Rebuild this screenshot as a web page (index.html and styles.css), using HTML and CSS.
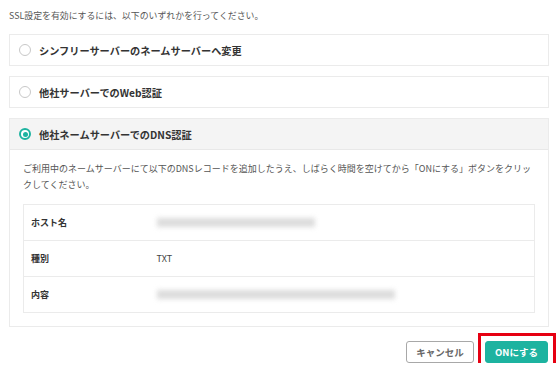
FILE: index.html
```html
<!DOCTYPE html>
<html lang="ja">

<head>
    <meta charset="UTF-8">
    <meta name="viewport" content="width=device-width, initial-scale=1.0">
    <title>SSL設定</title>
    <link rel="stylesheet" href="styles.css">
</head>

<body>
    <div class="container">
        <p class="lead">SSL設定を有効にするには、以下のいずれかを行ってください。</p>

        <div class="option">
            <div class="option-head">
                <span class="radio"></span>
                <span class="option-title">シンフリーサーバーのネームサーバーへ変更</span>
            </div>
        </div>

        <div class="option">
            <div class="option-head">
                <span class="radio"></span>
                <span class="option-title">他社サーバーでのWeb認証</span>
            </div>
        </div>

        <div class="option active">
            <div class="option-head">
                <span class="radio checked"></span>
                <span class="option-title">他社ネームサーバーでのDNS認証</span>
            </div>
            <div class="option-body">
                <p class="desc">ご利用中のネームサーバーにて以下のDNSレコードを追加したうえ、しばらく時間を空けてから「ONにする」ボタンをクリックしてください。</p>
                <table class="records">
                    <tr>
                        <th>ホスト名</th>
                        <td><span class="masked host"></span></td>
                    </tr>
                    <tr>
                        <th>種別</th>
                        <td>TXT</td>
                    </tr>
                    <tr>
                        <th>内容</th>
                        <td><span class="masked value"></span></td>
                    </tr>
                </table>
            </div>
        </div>

        <div class="actions">
            <button class="btn btn-cancel">キャンセル</button>
            <span class="highlight">
                <button class="btn btn-primary">ONにする</button>
            </span>
        </div>
    </div>
</body>

</html>
```

FILE: styles.css
```css
body {
    margin: 0;
    font-family: "Noto Sans CJK JP", "Noto Sans", sans-serif;
    color: #333;
    background: #fff;
}

.container {
    width: 540px;
    padding: 8px 0 0 9px;
}

.lead {
    margin: 0 0 10px;
    font-size: 8.9px;
    line-height: 16px;
    color: #555;
}

.option {
    border: 1px solid #ebebeb;
    margin-bottom: 10px;
}

.option-head {
    display: flex;
    align-items: center;
    height: 30px;
    padding-left: 9px;
}

.active .option-head {
    background-color: #f4f4f4;
    border-bottom: 1px solid #e8e8e8;
}

.radio {
    width: 10px;
    height: 10px;
    border: 1px solid #c8c8c8;
    border-radius: 50%;
    background: #fff;
    margin-right: 8px;
    position: relative;
}

.radio.checked {
    border: 2px solid #1db3a0;
    width: 8px;
    height: 8px;
}

.radio.checked::after {
    content: "";
    position: absolute;
    left: 1.5px;
    top: 1.5px;
    width: 5px;
    height: 5px;
    border-radius: 50%;
    background: #1db3a0;
}

.option-title {
    font-size: 10.2px;
    font-weight: bold;
    color: #333;
}

.option-body {
    padding: 11px 13px 13px 13px;
}

.desc {
    margin: 0 0 11px;
    font-size: 9px;
    line-height: 16px;
    color: #555;
}

.records {
    width: 100%;
    table-layout: fixed;
    border-collapse: collapse;
    border: 1px solid #ebebeb;
}

.records th,
.records td {
    height: 36px;
    padding: 0 7px;
    font-size: 9px;
    line-height: 12px;
    text-align: left;
    border-bottom: 1px solid #ebebeb;
    box-sizing: border-box;
}

.records th {
    width: 126px;
    font-weight: bold;
    color: #333;
}

.records td {
    color: #444;
}

.masked {
    display: block;
    height: 9px;
    background: #dcdcdc;
    filter: blur(2.5px);
}

.masked.host {
    width: 158px;
}

.masked.value {
    width: 238px;
}

.actions {
    display: flex;
    justify-content: flex-end;
    align-items: center;
    gap: 11px;
    margin-top: 14px;
    padding-right: 1px;
}

.btn {
    height: 22px;
    border-radius: 3px;
    font-family: inherit;
    font-size: 9.5px;
    font-weight: bold;
    cursor: pointer;
}

.btn-cancel {
    width: 68px;
    background: #fff;
    border: 1px solid #a8a8a8;
    color: #666;
}

.btn-primary {
    width: 63px;
    background: #1db3a0;
    border: 1px solid #1db3a0;
    color: #fff;
    display: block;
}

.highlight {
    position: relative;
}

.highlight::after {
    content: "";
    position: absolute;
    left: -7px;
    top: -8px;
    right: -8px;
    bottom: -8px;
    border: 3px solid #e60012;
}
```
